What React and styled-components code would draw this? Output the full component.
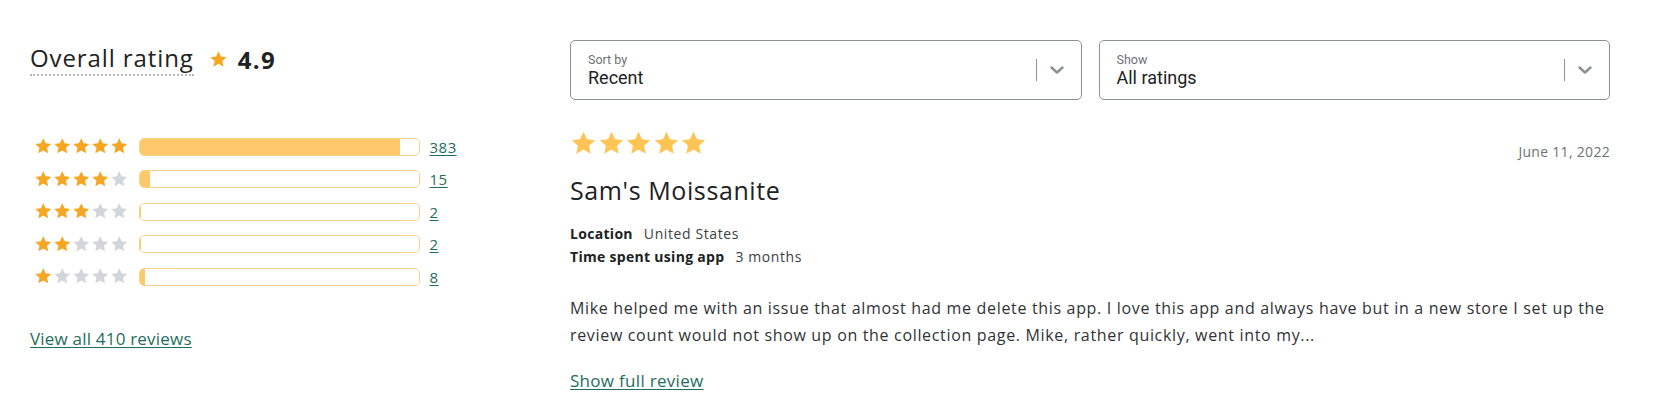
import React from 'react';
import styled, { createGlobalStyle } from 'styled-components';

const GlobalStyle = createGlobalStyle`
  body {
    margin: 0;
    background: #fff;
    font-family: 'Open Sans', Lato, 'Liberation Sans', sans-serif;
    color: #202223;
  }
`;

const ratings = [
  { stars: 5, count: 383 },
  { stars: 4, count: 15 },
  { stars: 3, count: 2 },
  { stars: 2, count: 2 },
  { stars: 1, count: 8 },
];
const total = 410;

const STAR = 'M12 1.6l3.1 6.6 7.2.8-5.4 4.9 1.5 7.1L12 17.4 5.6 21l1.5-7.1L1.7 9l7.2-.8z';

const Star = ({ size, color }) => (
  <svg width={size} height={size} viewBox='0 0 24 24'>
    <path d={STAR} fill={color} />
  </svg>
);

const Page = styled.div`
  display: grid;
  grid-template-columns: 440px 1fr;
  column-gap: 100px;
  padding: 40px 50px 0 30px;
  width: 1660px;
  height: 415px;
  box-sizing: border-box;
`;

const Summary = styled.aside`
  display: flex;
  flex-direction: column;
`;

const Heading = styled.div`
  display: flex;
  align-items: center;
  gap: 15px;
  margin-top: 3px;
`;

const HeadingTitle = styled.h2`
  margin: 0;
  font-size: 24px;
  font-weight: 400;
  line-height: 30px;
  letter-spacing: 0.9px;
  border-bottom: 2px dotted #b5b8bb;
  padding-bottom: 1px;
`;

const Score = styled.span`
  display: flex;
  align-items: center;
  gap: 10px;
  font-size: 24px;
  font-weight: 700;
  letter-spacing: 1.3px;
`;

const Rows = styled.ul`
  list-style: none;
  margin: 61px 0 0;
  padding: 0 0 0 4px;
  display: flex;
  flex-direction: column;
  gap: 13.5px;
`;

const Row = styled.li`
  display: flex;
  align-items: center;
  height: 19px;
`;

const StarSet = styled.span`
  display: flex;
  gap: ${(p) => p.$gap}px;
`;

const Bar = styled.span`
  display: block;
  width: 281px;
  height: 18px;
  margin-left: 10px;
  border: 1px solid #f6d38a;
  border-radius: 5px;
  box-sizing: border-box;
  overflow: hidden;
`;

const Fill = styled.span`
  display: block;
  height: 100%;
  background: #ffc96b;
`;

const Link = styled.a`
  color: #1f6e5d;
  text-decoration: underline;
  text-underline-offset: 2px;
  cursor: pointer;
`;

const Count = styled(Link)`
  margin-left: 10px;
  font-size: 15px;
  letter-spacing: 0.5px;
`;

const ViewAll = styled(Link)`
  align-self: flex-start;
  margin-top: 42px;
  font-size: 17px;
  line-height: 22px;
  letter-spacing: 0.2px;
`;

const Main = styled.section`
  display: flex;
  flex-direction: column;
`;

const Filters = styled.div`
  display: grid;
  grid-template-columns: 1fr 1fr;
  gap: 17px;
`;

const Select = styled.div`
  display: flex;
  align-items: center;
  height: 58px;
  border: 1px solid #8c9196;
  border-radius: 5px;
  padding: 0 16px 0 17px;
  font-family: Roboto, 'Liberation Sans', sans-serif;
`;

const SelectText = styled.div`
  flex: 1;
  display: flex;
  flex-direction: column;
`;

const SelectLabel = styled.span`
  font-size: 12.5px;
  line-height: 15px;
  color: #6d7175;
`;

const SelectValue = styled.span`
  font-size: 18px;
  line-height: 22px;
  color: #202223;
`;

const Divider = styled.span`
  width: 1px;
  height: 22px;
  background: #8c9196;
  margin-right: 12px;
`;

const Review = styled.article`
  display: flex;
  flex-direction: column;
  margin-top: 30px;
`;

const ReviewTop = styled.div`
  display: flex;
  justify-content: space-between;
  align-items: flex-start;
`;

const DateText = styled.span`
  font-size: 14px;
  letter-spacing: 0.3px;
  color: #6d7175;
  margin-top: 12px;
`;

const Name = styled.h3`
  margin: 13px 0 0;
  font-size: 25px;
  font-weight: 400;
  line-height: 32px;
  letter-spacing: 0.6px;
`;

const Meta = styled.dl`
  margin: 16px 0 0;
  display: flex;
  flex-direction: column;
  font-size: 14px;
  line-height: 23px;
`;

const MetaItem = styled.div`
  display: flex;
  gap: 11px;
`;

const MetaKey = styled.dt`
  font-weight: 700;
  letter-spacing: 0.3px;
`;

const MetaValue = styled.dd`
  margin: 0;
  color: #3b3e41;
  letter-spacing: 0.6px;
`;

const Body = styled.p`
  margin: 27px 0 0;
  font-size: 16px;
  line-height: 27px;
  letter-spacing: 0.67px;
  color: #303335;
`;

const ShowFull = styled(Link)`
  margin-top: 20px;
  align-self: flex-start;
  font-size: 17px;
  letter-spacing: 0.3px;
`;

const Chevron = () => (
  <svg width='16' height='16' viewBox='0 0 16 16'>
    <path d='M2.5 5.5L8 10.5l5.5-5' fill='none' stroke='#8c9196' strokeWidth='2.4' strokeLinecap='round' strokeLinejoin='round' />
  </svg>
);

const Stars = ({ value, size, gap, on, off }) => (
  <StarSet $gap={gap}>
    {[1, 2, 3, 4, 5].map((i) => (
      <Star key={i} size={size} color={i <= value ? on : off} />
    ))}
  </StarSet>
);

const Dropdown = ({ label, value }) => (
  <Select>
    <SelectText>
      <SelectLabel>{label}</SelectLabel>
      <SelectValue>{value}</SelectValue>
    </SelectText>
    <Divider />
    <Chevron />
  </Select>
);

export default function App() {
  return (
    <>
      <GlobalStyle />
      <Page>
        <Summary>
          <Heading>
            <HeadingTitle>Overall rating</HeadingTitle>
            <Score>
              <Star size={19} color='#f5a623' />
              4.9
            </Score>
          </Heading>
          <Rows>
            {ratings.map((r) => (
              <Row key={r.stars}>
                <Stars value={r.stars} size={18.5} gap={0.5} on='#f5a623' off='#d2d5d9' />
                <Bar>
                  <Fill style={{ width: `${(r.count / total) * 100}%` }} />
                </Bar>
                <Count>{r.count}</Count>
              </Row>
            ))}
          </Rows>
          <ViewAll>View all 410 reviews</ViewAll>
        </Summary>
        <Main>
          <Filters>
            <Dropdown label='Sort by' value='Recent' />
            <Dropdown label='Show' value='All ratings' />
          </Filters>
          <Review>
            <ReviewTop>
              <Stars value={5} size={27} gap={0.6} on='#ffc453' off='#d2d5d9' />
              <DateText>June 11, 2022</DateText>
            </ReviewTop>
            <Name>Sam's Moissanite</Name>
            <Meta>
              <MetaItem>
                <MetaKey>Location</MetaKey>
                <MetaValue>United States</MetaValue>
              </MetaItem>
              <MetaItem>
                <MetaKey>Time spent using app</MetaKey>
                <MetaValue>3 months</MetaValue>
              </MetaItem>
            </Meta>
            <Body>
              Mike helped me with an issue that almost had me delete this app. I love this app and
              always have but in a new store I set up the review count would not show up on the
              collection page. Mike, rather quickly, went into my...
            </Body>
            <ShowFull>Show full review</ShowFull>
          </Review>
        </Main>
      </Page>
    </>
  );
}
